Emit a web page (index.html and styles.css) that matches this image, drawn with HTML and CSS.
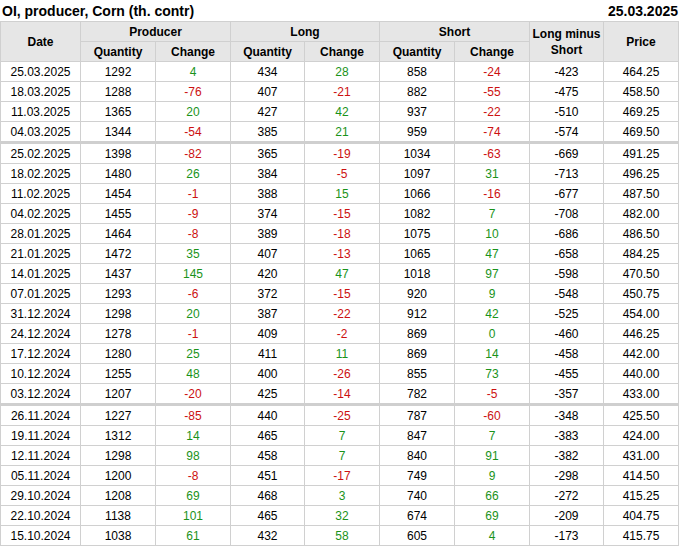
FILE: index.html
```html
<!DOCTYPE html>
<html>
<head>
<meta charset="utf-8">
<link rel="stylesheet" href="styles.css">
</head>
<body>
<div class="titlebar">
  <span class="title">OI, producer, Corn (th. contr)</span>
  <span class="date">25.03.2025</span>
</div>
<table class="cot">
  <colgroup>
    <col class="c-date"><col class="c75"><col class="c75"><col class="c74"><col class="c75"><col class="c75"><col class="c75"><col class="c74"><col class="c75">
  </colgroup>
  <thead>
    <tr>
      <th rowspan="2">Date</th>
      <th colspan="2">Producer</th>
      <th colspan="2">Long</th>
      <th colspan="2">Short</th>
      <th rowspan="2">Long minus<br>Short</th>
      <th rowspan="2">Price</th>
    </tr>
    <tr>
      <th>Quantity</th><th>Change</th>
      <th>Quantity</th><th>Change</th>
      <th>Quantity</th><th>Change</th>
    </tr>
  </thead>
  <tbody>
    <tr><td>25.03.2025</td><td>1292</td><td class="up">4</td><td>434</td><td class="up">28</td><td>858</td><td class="dn">-24</td><td>-423</td><td>464.25</td></tr>
    <tr><td>18.03.2025</td><td>1288</td><td class="dn">-76</td><td>407</td><td class="dn">-21</td><td>882</td><td class="dn">-55</td><td>-475</td><td>458.50</td></tr>
    <tr><td>11.03.2025</td><td>1365</td><td class="up">20</td><td>427</td><td class="up">42</td><td>937</td><td class="dn">-22</td><td>-510</td><td>469.25</td></tr>
    <tr><td>04.03.2025</td><td>1344</td><td class="dn">-54</td><td>385</td><td class="up">21</td><td>959</td><td class="dn">-74</td><td>-574</td><td>469.50</td></tr>
    <tr class="sep"><td>25.02.2025</td><td>1398</td><td class="dn">-82</td><td>365</td><td class="dn">-19</td><td>1034</td><td class="dn">-63</td><td>-669</td><td>491.25</td></tr>
    <tr><td>18.02.2025</td><td>1480</td><td class="up">26</td><td>384</td><td class="dn">-5</td><td>1097</td><td class="up">31</td><td>-713</td><td>496.25</td></tr>
    <tr><td>11.02.2025</td><td>1454</td><td class="dn">-1</td><td>388</td><td class="up">15</td><td>1066</td><td class="dn">-16</td><td>-677</td><td>487.50</td></tr>
    <tr><td>04.02.2025</td><td>1455</td><td class="dn">-9</td><td>374</td><td class="dn">-15</td><td>1082</td><td class="up">7</td><td>-708</td><td>482.00</td></tr>
    <tr><td>28.01.2025</td><td>1464</td><td class="dn">-8</td><td>389</td><td class="dn">-18</td><td>1075</td><td class="up">10</td><td>-686</td><td>486.50</td></tr>
    <tr><td>21.01.2025</td><td>1472</td><td class="up">35</td><td>407</td><td class="dn">-13</td><td>1065</td><td class="up">47</td><td>-658</td><td>484.25</td></tr>
    <tr><td>14.01.2025</td><td>1437</td><td class="up">145</td><td>420</td><td class="up">47</td><td>1018</td><td class="up">97</td><td>-598</td><td>470.50</td></tr>
    <tr><td>07.01.2025</td><td>1293</td><td class="dn">-6</td><td>372</td><td class="dn">-15</td><td>920</td><td class="up">9</td><td>-548</td><td>450.75</td></tr>
    <tr><td>31.12.2024</td><td>1298</td><td class="up">20</td><td>387</td><td class="dn">-22</td><td>912</td><td class="up">42</td><td>-525</td><td>454.00</td></tr>
    <tr><td>24.12.2024</td><td>1278</td><td class="dn">-1</td><td>409</td><td class="dn">-2</td><td>869</td><td class="up">0</td><td>-460</td><td>446.25</td></tr>
    <tr><td>17.12.2024</td><td>1280</td><td class="up">25</td><td>411</td><td class="up">11</td><td>869</td><td class="up">14</td><td>-458</td><td>442.00</td></tr>
    <tr><td>10.12.2024</td><td>1255</td><td class="up">48</td><td>400</td><td class="dn">-26</td><td>855</td><td class="up">73</td><td>-455</td><td>440.00</td></tr>
    <tr><td>03.12.2024</td><td>1207</td><td class="dn">-20</td><td>425</td><td class="dn">-14</td><td>782</td><td class="dn">-5</td><td>-357</td><td>433.00</td></tr>
    <tr class="sep"><td>26.11.2024</td><td>1227</td><td class="dn">-85</td><td>440</td><td class="dn">-25</td><td>787</td><td class="dn">-60</td><td>-348</td><td>425.50</td></tr>
    <tr><td>19.11.2024</td><td>1312</td><td class="up">14</td><td>465</td><td class="up">7</td><td>847</td><td class="up">7</td><td>-383</td><td>424.00</td></tr>
    <tr><td>12.11.2024</td><td>1298</td><td class="up">98</td><td>458</td><td class="up">7</td><td>840</td><td class="up">91</td><td>-382</td><td>431.00</td></tr>
    <tr><td>05.11.2024</td><td>1200</td><td class="dn">-8</td><td>451</td><td class="dn">-17</td><td>749</td><td class="up">9</td><td>-298</td><td>414.50</td></tr>
    <tr><td>29.10.2024</td><td>1208</td><td class="up">69</td><td>468</td><td class="up">3</td><td>740</td><td class="up">66</td><td>-272</td><td>415.25</td></tr>
    <tr><td>22.10.2024</td><td>1138</td><td class="up">101</td><td>465</td><td class="up">32</td><td>674</td><td class="up">69</td><td>-209</td><td>404.75</td></tr>
    <tr><td>15.10.2024</td><td>1038</td><td class="up">61</td><td>432</td><td class="up">58</td><td>605</td><td class="up">4</td><td>-173</td><td>415.75</td></tr>
  </tbody>
</table>
</body>
</html>
```

FILE: styles.css
```css
html, body {
  margin: 0;
  padding: 0;
  background: #ffffff;
  font-family: "Liberation Sans", Arial, sans-serif;
  color: #000;
}

.titlebar {
  display: flex;
  justify-content: space-between;
  align-items: center;
  width: 678px;
  height: 21px;
  padding: 0 0 0 2px;
  box-sizing: border-box;
  font-weight: bold;
  font-size: 14px;
}

.titlebar .date {
  font-size: 14px;
}

.cot {
  border-collapse: collapse;
  table-layout: fixed;
  width: 679px;
  font-size: 12px;
}

.c-date { width: 80px; }
.c75 { width: 75px; }
.c74 { width: 74px; }

.cot th,
.cot td {
  border: 1px solid #d0d0d0;
  text-align: center;
  vertical-align: middle;
  padding: 0;
  height: 19px;
  line-height: 14px;
}

.cot th {
  background: #e6e6e6;
  font-weight: bold;
  line-height: 16px;
}

.cot tr.sep td {
  border-top: 3px solid #cfcfcf;
}

.up { color: #1a931a; }
.dn { color: #cc1111; }
```
